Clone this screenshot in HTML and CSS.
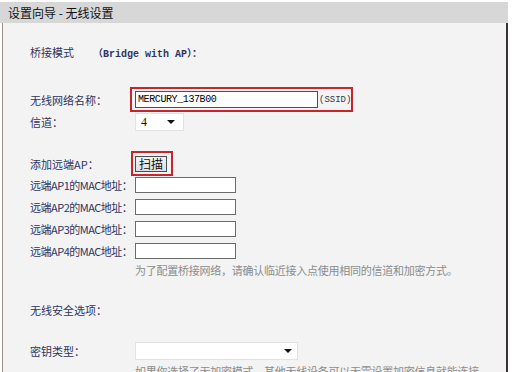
FILE: index.html
```html
<!DOCTYPE html>
<html lang="zh-CN">
<head>
<meta charset="utf-8">
<title>设置向导 - 无线设置</title>
<link rel="stylesheet" href="styles.css">
</head>
<body>
<div class="wizard">
  <div class="titlebar">设置向导 - 无线设置</div>
  <div class="panel">
    <div class="r-bridge">
      <span class="label">桥接模式</span>
      <span class="mode">（Bridge with AP）：</span>
    </div>

    <div class="row r-ssid">
      <span class="label">无线网络名称：</span>
      <div class="mark mark-ssid">
        <input class="ssid-input" type="text" value="MERCURY_137B00">
        <span class="ssid-tag">(SSID)</span>
      </div>
    </div>

    <div class="row r-channel">
      <span class="label">信道：</span>
      <div class="select select-channel"><span class="sel-val">4</span><span class="caret"></span></div>
    </div>

    <div class="row r-scan">
      <span class="label">添加远端AP：</span>
      <div class="mark mark-scan"><button class="btn" type="button">扫描</button></div>
    </div>

    <div class="row r-mac first">
      <span class="label mac-label">远端AP1的MAC地址：</span>
      <input class="mac-input" type="text">
    </div>
    <div class="row r-mac">
      <span class="label mac-label">远端AP2的MAC地址：</span>
      <input class="mac-input" type="text">
    </div>
    <div class="row r-mac">
      <span class="label mac-label">远端AP3的MAC地址：</span>
      <input class="mac-input" type="text">
    </div>
    <div class="row r-mac">
      <span class="label mac-label">远端AP4的MAC地址：</span>
      <input class="mac-input" type="text">
    </div>

    <div class="row r-hint">
      <span class="hint">为了配置桥接网络，请确认临近接入点使用相同的信道和加密方式。</span>
    </div>

    <div class="row r-sec">
      <span class="label">无线安全选项：</span>
    </div>

    <div class="row r-key">
      <span class="label">密钥类型：</span>
      <div class="select select-key"><span class="sel-val"></span><span class="caret"></span></div>
    </div>

    <div class="row r-note">
      <span class="hint">如果你选择了无加密模式，其他无线设备可以无需设置加密信息就能连接</span>
    </div>
  </div>
</div>
</body>
</html>
```

FILE: styles.css
```css
* { box-sizing: border-box; }

html, body {
  margin: 0;
  padding: 0;
  background: #ffffff;
  overflow: hidden;
}

body {
  font-family: "Noto Sans CJK SC", "Noto Sans", sans-serif;
  font-size: 11px;
  color: #2f3460;
}

.wizard {
  width: 508px;
  padding-top: 2px;
}

.titlebar {
  height: 21px;
  line-height: 21px;
  background: #d7d7d7;
  color: #111111;
  font-size: 12px;
  padding-left: 8px;
  white-space: nowrap;
}

.panel {
  margin-left: 2px;
  background: #f3f3f3;
  border-left: 1px solid #9c8f8c;
  border-right: 2px solid #3b3333;
  padding: 19px 0 40px 27px;
  min-height: 400px;
}

.label {
  white-space: nowrap;
  line-height: 16px;
}

.r-bridge {
  display: flex;
  align-items: center;
  gap: 19px;
  height: 20px;
}

.mode {
  font-family: "Liberation Mono", "Noto Sans CJK SC", monospace;
  font-size: 10px;
  font-weight: bold;
  white-space: nowrap;
}

.row {
  display: grid;
  grid-template-columns: 100px auto;
  align-items: center;
  justify-items: start;
}

.r-ssid { margin-top: 25px; height: 25px; }
.r-channel { margin-top: 1px; height: 18px; }
.r-scan { margin-top: 20px; height: 25px; }
.r-mac { margin-top: 6px; height: 16px; }
.r-mac.first { margin-top: 1px; }
.r-hint { margin-top: 3px; height: 16px; }
.r-sec { margin-top: 24px; height: 16px; }
.r-key { margin-top: 24px; height: 18px; }
.r-note { margin-top: 3px; height: 16px; }

.mac-label {
  letter-spacing: -0.5px;
}

.mark {
  display: inline-flex;
  align-items: center;
  border: 2px solid #c9232b;
}

.mark-ssid {
  height: 25px;
  padding: 2px 0 2px 3px;
}

.ssid-input {
  width: 183px;
  height: 17px;
  margin: 0;
  padding: 0 0 0 2px;
  border: 1px solid #4f4f4f;
  background: #ffffff;
  color: #000000;
  font-family: "Liberation Mono", monospace;
  font-size: 10px;
  letter-spacing: -0.4px;
  outline: none;
}

.ssid-tag {
  margin-left: 1px;
  font-family: "Liberation Mono", monospace;
  font-size: 9px;
  color: #333344;
  white-space: nowrap;
}

.mark-scan {
  margin-left: 1px;
  height: 25px;
  padding: 3px 4px 2px 2px;
  align-items: flex-start;
}

.btn {
  width: 32px;
  height: 16px;
  margin: 0;
  padding: 0;
  border: 1px solid #4a4a4a;
  background: linear-gradient(#f2f4f6, #dde0e4);
  color: #111111;
  font-family: "Noto Sans CJK SC", sans-serif;
  font-size: 12px;
  line-height: 14px;
}

.mac-input {
  margin: 0 0 0 5px;
  width: 101px;
  height: 16px;
  padding: 0;
  border: 1px solid #6b6b6b;
  background: #ffffff;
  outline: none;
}

.select {
  margin-left: 5px;
  height: 18px;
  display: flex;
  align-items: center;
  justify-content: space-between;
  background: #ffffff;
  border: 1px solid #e2e2e2;
  padding-left: 5px;
}

.select-channel {
  width: 49px;
  padding-right: 8px;
}

.select-key {
  width: 163px;
  padding-right: 5px;
}

.sel-val {
  font-family: "Liberation Serif", serif;
  font-size: 12px;
  color: #111111;
}

.caret {
  width: 0;
  height: 0;
  border-left: 4px solid transparent;
  border-right: 4px solid transparent;
  border-top: 4px solid #111111;
}

.hint {
  grid-column: 2;
  margin-left: 5px;
  color: #8c8c8c;
  white-space: nowrap;
  letter-spacing: -0.25px;
  line-height: 16px;
}
```
